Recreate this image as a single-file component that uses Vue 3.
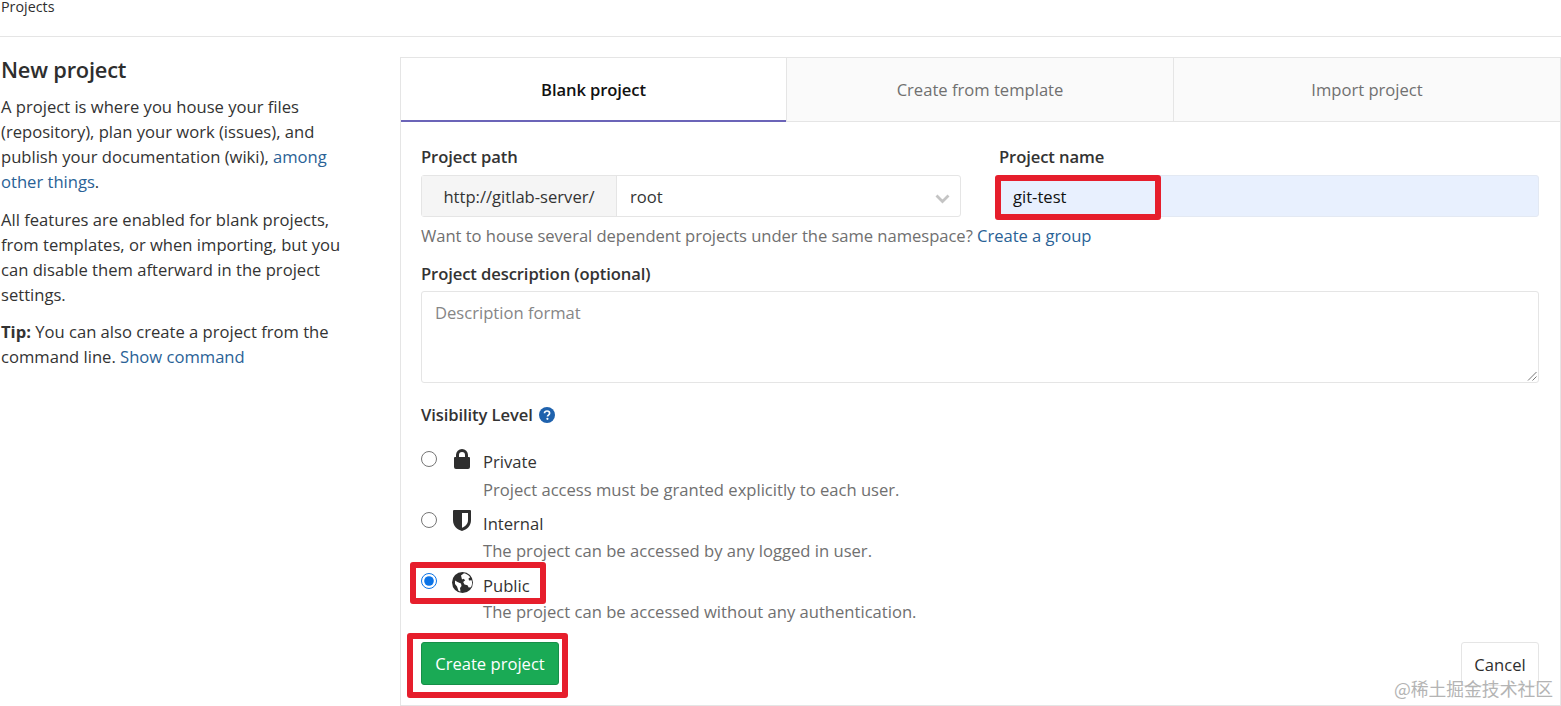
<script setup>
const levels = [
  { name: 'Private', icon: 'lock', desc: 'Project access must be granted explicitly to each user.' },
  { name: 'Internal', icon: 'shield', desc: 'The project can be accessed by any logged in user.' },
  { name: 'Public', icon: 'globe', desc: 'The project can be accessed without any authentication.', checked: true },
]
const tabs = ['Blank project', 'Create from template', 'Import project']
</script>

<template>
  <div class="page">
    <div class="crumb">Projects</div>
    <div class="main">
      <aside class="side">
        <h1>New project</h1>
        <p>A project is where you house your files (repository), plan your work (issues), and publish your documentation (wiki), <a>among other things</a>.</p>
        <p>All features are enabled for blank projects, from templates, or when importing, but you can disable them afterward in the project settings.</p>
        <p><b>Tip:</b> You can also create a project from the command line. <a>Show command</a></p>
      </aside>
      <section class="card">
        <div class="tabs">
          <div v-for="(t, i) in tabs" :key="t" class="tab" :class="{ active: i === 0 }">{{ t }}</div>
        </div>
        <div class="form">
          <div class="row">
            <div class="path-col">
              <label>Project path</label>
              <div class="group">
                <span class="addon">http://gitlab-server/</span>
                <span class="select">root
                  <svg class="chev" width="15" height="10" viewBox="0 0 15 10"><path d="M1.500 1.500 7.500 7.500l6-6" fill="none" stroke="#c4c4c4" stroke-width="2.800"/></svg>
                </span>
              </div>
            </div>
            <div class="name-col">
              <label>Project name</label>
              <div class="name-input">git-test<span class="mark mark-name"></span></div>
            </div>
          </div>
          <div class="help">Want to house several dependent projects under the same namespace? <a>Create a group</a></div>
          <label class="desc-label">Project description (optional)</label>
          <div class="textarea">Description format
            <svg class="grip" width="10" height="10" viewBox="0 0 10 10"><path d="M9.500 1 1 9.500M9.500 5.500 5.500 9.500" stroke="#777" stroke-width="1" fill="none"/></svg>
          </div>
          <div class="vis-title">Visibility Level
            <svg width="16" height="16" viewBox="0 0 16 16"><circle cx="8" cy="8" r="8" fill="#1f62ad"/><path d="M5.500 6.300C5.500 4.900 6.600 4 8 4s2.600.9 2.600 2.200c0 1.900-2.100 1.800-2.100 3.300" fill="none" stroke="#fff" stroke-width="1.700"/><circle cx="8.400" cy="11.800" r="1.100" fill="#fff"/></svg>
          </div>
          <div class="levels">
            <div v-for="l in levels" :key="l.name" class="level">
              <input type="radio" name="vis" class="radio" :checked="l.checked" />
              <svg v-if="l.icon === 'lock'" class="licon" width="18" height="20" viewBox="0 0 18 20"><path fill-rule="evenodd" fill="#2e2e2e" d="M3 8V6a6 6 0 0 1 12 0v2h1a1 1 0 0 1 1 1v9a2 2 0 0 1-2 2H3a2 2 0 0 1-2-2V9a1 1 0 0 1 1-1h1zm3 0h6V6a3 3 0 0 0-6 0v2z"/></svg>
              <svg v-else-if="l.icon === 'shield'" class="licon" width="18" height="21" viewBox="0 0 18 21"><path fill-rule="evenodd" fill="#2e2e2e" d="M1 0h16a1 1 0 0 1 1 1v9c0 6-4 9.500-9 11-5-1.500-9-5-9-11V1a1 1 0 0 1 1-1zm8 3v14.700c3.500-1.300 6-3.700 6-7.700V3H9z"/></svg>
              <svg v-else class="licon globe" width="21" height="21" viewBox="0 0 21 21"><circle cx="10.500" cy="10.500" r="10.500" fill="#2e2e2e"/><path fill="#fff" d="M9 3.500 12 1.300c2.500.5 4.800 2 6.200 4L16.500 6.500 17 8.500l2.600-.3c.8 2.400.6 4.800-.6 7l-2.300.3-1.200-2.200-3-.7-1.300-2.500 2-1.800-1.700-1.600-1.500.8zM3 8.500 5.500 10l3.500 1.500.5 2.500-1.500 2 .5 3.500c-1-.2-1.500-.5-2-.8L5 14.500 3 12z"/></svg>
              <div class="ltext">
                <div class="lname">{{ l.name }}</div>
                <div class="ldesc">{{ l.desc }}</div>
              </div>
              <span v-if="l.checked" class="mark mark-public"></span>
            </div>
          </div>
          <div class="actions">
            <button class="create">Create project<span class="mark mark-create"></span></button>
            <button class="cancel">Cancel</button>
          </div>
        </div>
      </section>
    </div>
    <div class="watermark">@稀土掘金技术社区</div>
  </div>
</template>

<style>
html, body { margin: 0; background: #fff; overflow: hidden; }
</style>

<style scoped>
.page {
  position: relative;
  width: 1561px;
  height: 706px;
  overflow: hidden;
  font-family: "Open Sans", "Noto Sans", sans-serif;
  color: #2e2e2e;
  font-size: 16.600px;
}
.crumb {
  height: 36px;
  border-bottom: 1px solid #e5e5e5;
  font-size: 14.300px;
  line-height: 14px;
  padding-left: 1px;
}
.main { display: flex; padding-top: 20px; }
.side { width: 400px; flex: none; padding-left: 1px; box-sizing: border-box; padding-right: 55px; }
h1 { margin: -1px 0 10px; font-size: 21.800px; font-weight: 600; line-height: 28px; letter-spacing: -0.2px; }
.side p { margin: 0 0 12.500px; line-height: 25px; color: #333; }
.side b { font-weight: 700; }
a { color: #2a6296; }
.card {
  flex: 1;
  height: 649px;
  box-sizing: border-box;
  border: 1px solid #e5e5e5;
}
.tabs { display: flex; height: 64px; box-sizing: border-box; }
.tab {
  flex: 1 1 0;
  display: flex;
  align-items: center;
  justify-content: center;
  box-sizing: border-box;
  background: #fafafa;
  color: #707070;
  border-bottom: 1px solid #e5e5e5;
  border-left: 1px solid #e5e5e5;
}
.tab.active {
  flex: none;
  width: 385px;
  background: #fff;
  color: #111;
  font-weight: 600;
  border-left: 0;
  border-bottom: 2px solid #6b64b8;
  letter-spacing: -0.1px;
}
.form { padding: 24px 21px 0 20px; display: flex; flex-direction: column; }
label { display: block; font-weight: 600; line-height: 22px; color: #333; letter-spacing: -0.1px; }
.row { display: flex; gap: 38px; }
.path-col { width: 540px; flex: none; }
.name-col { flex: 1; position: relative; }
.group { display: flex; height: 42px; margin-top: 7px; border: 1px solid #e5e5e5; border-radius: 3px; box-sizing: border-box; }
.addon { width: 195px; flex: none; box-sizing: border-box; background: #f5f5f5; border-right: 1px solid #e5e5e5; display: flex; align-items: center; justify-content: center; color: #333; }
.select { flex: 1; position: relative; display: flex; align-items: center; padding-left: 13px; color: #333; }
.chev { position: absolute; right: 10px; top: 18px; }
.name-input {
  position: relative;
  height: 42px;
  margin-top: 7px;
  box-sizing: border-box;
  background: #e8f0fe;
  border: 1px solid #e3e9f3;
  border-radius: 3px;
  display: flex;
  align-items: center;
  padding-left: 13px;
  color: #111;
}
.mark { position: absolute; border: 6px solid #e61e2c; border-radius: 3px; box-sizing: border-box; pointer-events: none; }
.mark-name { left: -5px; top: -1px; width: 166px; height: 45px; }
.help { margin-top: 7px; line-height: 24px; color: #707070; letter-spacing: -0.04px; }
.desc-label { margin-top: 15px; }
.textarea {
  position: relative;
  margin-top: 6px;
  height: 92px;
  box-sizing: border-box;
  border: 1px solid #e5e5e5;
  border-radius: 3px;
  padding: 9px 13px;
  color: #868686;
  line-height: 24px;
}
.grip { position: absolute; right: 1px; bottom: 1px; }
.vis-title { display: flex; align-items: center; gap: 6px; font-weight: 600; line-height: 22px; margin-top: 21px; color: #333; letter-spacing: -0.1px; }
.levels { margin-top: 23px; display: flex; flex-direction: column; }
.level { position: relative; display: flex; height: 61px; }
.radio { width: 16px; height: 16px; margin: 2px 0 0; flex: none; accent-color: #0b73e6; }
.licon { position: absolute; left: 32px; top: 0; }
.globe { left: 31px; top: 1px; }
.ltext { margin-left: 46px; padding-top: 1px; }
.lname { line-height: 24px; color: #333; }
.ldesc { line-height: 24px; margin-top: 4px; color: #707070; }
.level:nth-child(2) .ltext { padding-top: 2px; }
.level:nth-child(2) .ldesc { margin-top: 3px; }
.level:nth-child(3) .ltext { padding-top: 3px; }
.level:nth-child(3) .ldesc { margin-top: 2px; }
.mark-public { left: -11px; top: -9px; width: 136px; height: 42px; }
.actions { display: flex; justify-content: space-between; margin-top: 10px; }
.create {
  position: relative;
  width: 138px;
  height: 43px;
  background: #1aaa55;
  border: 1px solid #168f48;
  border-radius: 3px;
  color: #fff;
  font: inherit;
  padding: 0;
}
.mark-create { left: -15px; top: -10px; width: 161px; height: 65px; }
.cancel {
  width: 78px;
  height: 44px;
  background: #fff;
  border: 1px solid #e5e5e5;
  border-radius: 3px;
  color: #2e2e2e;
  font: inherit;
  padding: 0;
}
.watermark {
  position: absolute;
  right: 8px;
  bottom: 6px;
  font-family: "Noto Sans CJK SC", sans-serif;
  font-size: 17.800px;
  line-height: 24px;
  color: #b4b4b4;
}
</style>
